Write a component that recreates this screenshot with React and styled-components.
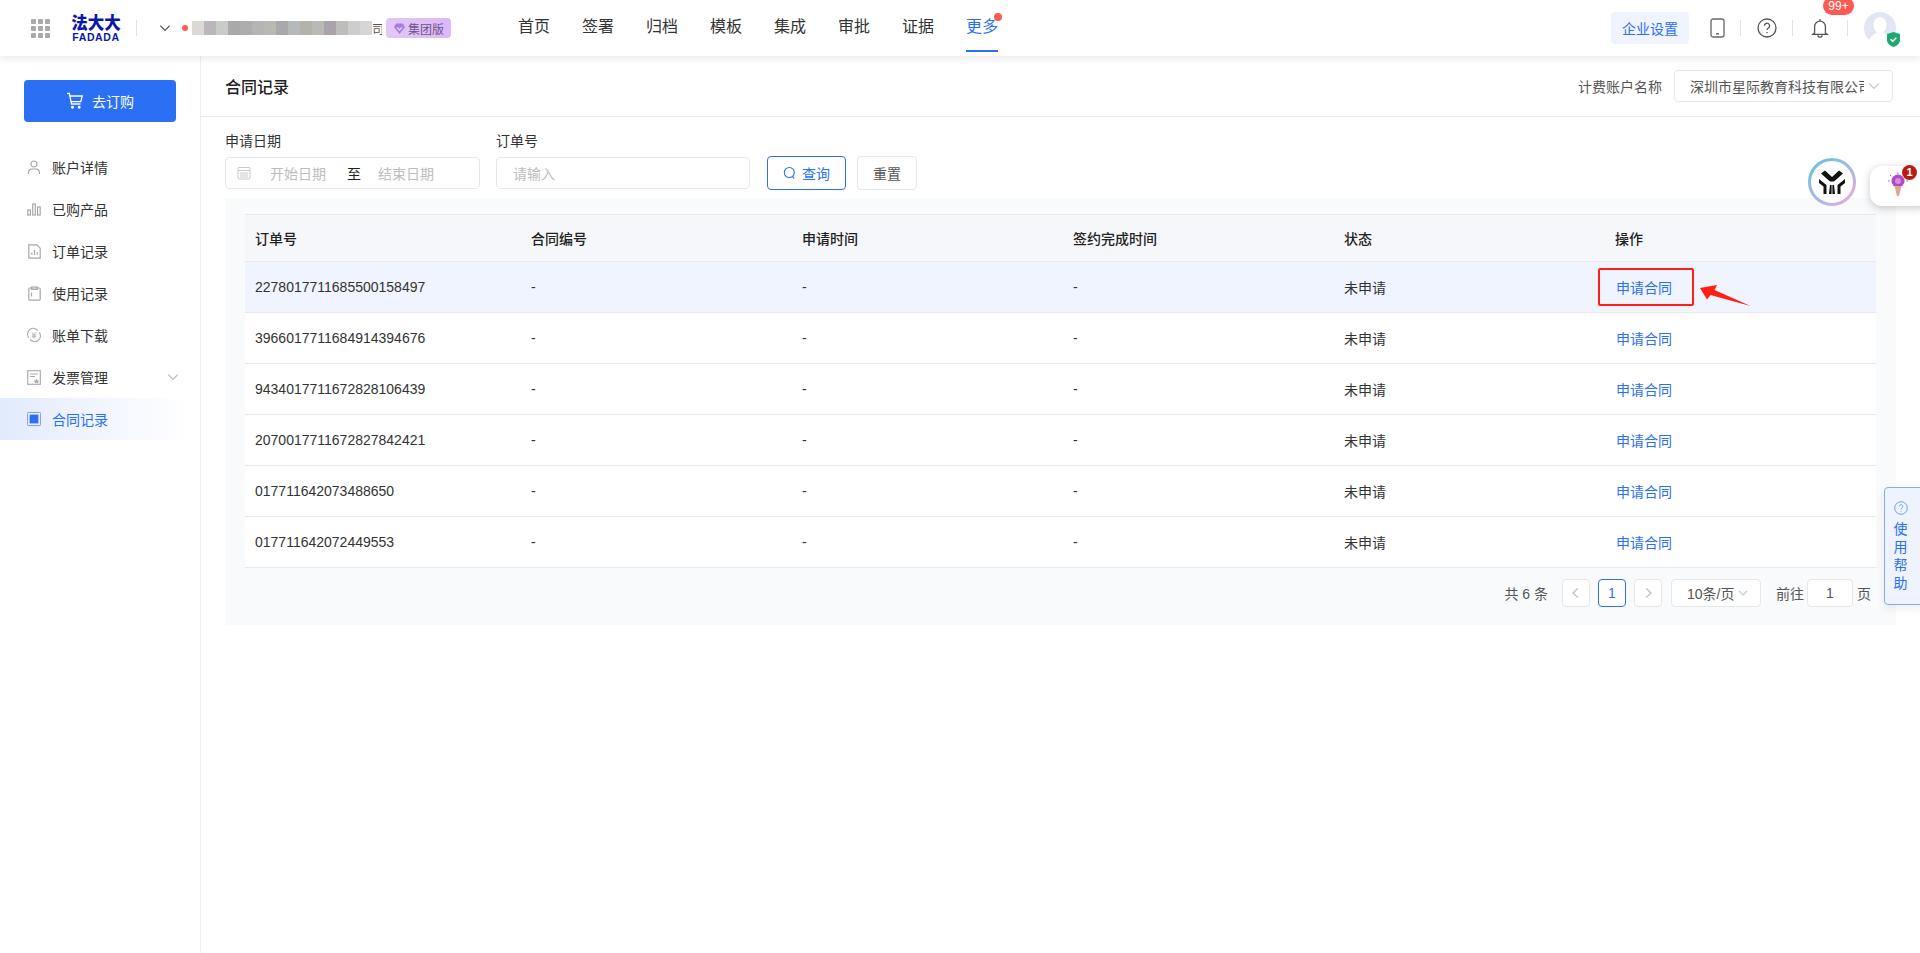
import React from 'react';
import styled, { createGlobalStyle } from 'styled-components';

const GlobalStyle = createGlobalStyle`
  * { box-sizing: border-box; }
  html, body { margin: 0; padding: 0; height: 100%; background: #fff; }
  body {
    font-family: "Liberation Sans", "Noto Sans CJK SC", sans-serif;
    font-size: 14px;
    color: #333;
  }
`;

const Page = styled.div`
  position: relative;
  width: 100%;
  height: 100vh;
  overflow: hidden;
  display: flex;
  flex-direction: column;
`;

const Header = styled.header`
  position: relative;
  z-index: 2;
  height: 56px;
  flex: none;
  display: flex;
  align-items: center;
  background: #fff;
  box-shadow: 0 2px 8px rgba(0, 0, 0, 0.1);
`;

const LeftGroup = styled.div`
  width: 518px;
  flex: none;
  display: flex;
  align-items: center;
  padding-left: 31px;
`;

const AppGrid = styled.div`
  display: grid;
  grid-template-columns: repeat(3, 5px);
  gap: 2px;
  margin-right: 21px;
  span { width: 5px; height: 5px; background: #a9a9a9; border-radius: 1px; }
`;

const Logo = styled.div`
  width: 50px;
  color: #0a18aa;
  font-weight: 700;
  display: flex;
  flex-direction: column;
  align-items: center;
`;

const LogoCn = styled.div`
  font-size: 16.5px;
  line-height: 16px;
  font-weight: 900;
  white-space: nowrap;
`;

const LogoEn = styled.div`
  font-size: 10.5px;
  line-height: 10px;
  letter-spacing: 0.6px;
  margin-top: 1px;
`;

const VLine = styled.div`
  width: 1px;
  height: 16px;
  background: #e4e4e6;
  flex: none;
`;

const LogoLine = styled(VLine)`
  margin: 0 21px 0 15px;
`;

const RedDot = styled.span`
  width: 6px;
  height: 6px;
  border-radius: 50%;
  background: #ff5a52;
  margin: 0 4px 0 10px;
  flex: none;
`;

const Mosaic = styled.div`
  display: flex;
  height: 14px;
  flex: none;
`;

const MosaicCell = styled.span`
  width: 12px;
  background: ${(p) => p.$c};
`;

const CompanyEnd = styled.span`
  font-size: 12px;
  color: #555;
  width: 10px;
  overflow: hidden;
  flex: none;
`;

const PlanBadge = styled.div`
  height: 20px;
  width: 65px;
  margin-left: 4px;
  flex: none;
  display: flex;
  align-items: center;
  justify-content: center;
  gap: 2px;
  border-radius: 4px;
  background: linear-gradient(90deg, #e2c8f6, #dcb8f8);
  color: #6d5488;
  font-size: 12px;
`;

const Nav = styled.nav`
  display: flex;
  gap: 32px;
  height: 56px;
`;

const NavItem = styled.a`
  position: relative;
  height: 52px;
  line-height: 54px;
  font-size: 16px;
  color: ${(p) => (p.$active ? '#2b6ff5' : '#333')};
  border-bottom: 2px solid ${(p) => (p.$active ? '#2b6ff5' : 'transparent')};
`;

const NavDot = styled.i`
  position: absolute;
  top: 13px;
  right: -4px;
  width: 8px;
  height: 8px;
  border-radius: 50%;
  background: #ff5a52;
`;

const RightGroup = styled.div`
  margin-left: auto;
  display: flex;
  align-items: center;
  padding-right: 24px;
`;

const SettingsBtn = styled.div`
  width: 78px;
  height: 32px;
  border-radius: 4px;
  background: #f0f4fe;
  color: #2b6ff5;
  display: flex;
  align-items: center;
  justify-content: center;
  margin-right: 21px;
`;

const ToolIcon = styled.div`
  display: flex;
  align-items: center;
  justify-content: center;
  width: ${(p) => p.$w}px;
  flex: none;
`;

const BellWrap = styled.div`
  position: relative;
  width: 54px;
  display: flex;
  justify-content: center;
  flex: none;
`;

const CountBadge = styled.span`
  position: absolute;
  left: 30px;
  top: -21px;
  width: 31px;
  height: 18px;
  border-radius: 9px;
  background: #ff5a52;
  color: #fff;
  font-size: 12px;
  line-height: 18px;
  text-align: center;
`;

const Avatar = styled.div`
  position: relative;
  width: 32px;
  height: 32px;
  margin-left: 16px;
  flex: none;
`;

const ShieldWrap = styled.div`
  position: absolute;
  right: -4px;
  bottom: -3px;
  line-height: 0;
`;

const Body = styled.div`
  flex: 1;
  display: flex;
  min-height: 0;
`;

const Sidebar = styled.aside`
  width: 201px;
  flex: none;
  border-right: 1px solid #eceef2;
  padding-top: 24px;
`;

const OrderBtn = styled.div`
  margin-left: 24px;
  width: 152px;
  height: 42px;
  border-radius: 4px;
  background: #2b6ff5;
  color: #fff;
  display: flex;
  align-items: center;
  justify-content: center;
  gap: 8px;
  margin-bottom: 24px;
`;

const MenuItem = styled.div`
  position: relative;
  height: 42px;
  display: flex;
  align-items: center;
  gap: 11px;
  padding-left: 27px;
  color: ${(p) => (p.$active ? '#2b6ff5' : '#333')};
  background: ${(p) => (p.$active ? 'linear-gradient(90deg, #e2eafd, #fff 95%)' : 'transparent')};
`;

const MenuIcon = styled.span`
  width: 14px;
  height: 16px;
  display: flex;
  align-items: center;
  justify-content: center;
  flex: none;
`;

const MenuCaret = styled.span`
  position: absolute;
  right: 20px;
  top: 14px;
  line-height: 0;
`;

const Main = styled.main`
  flex: 1;
  min-width: 0;
`;

const TitleBar = styled.div`
  height: 61px;
  padding: 0 27px 0 24px;
  display: flex;
  align-items: center;
  justify-content: space-between;
  border-bottom: 1px solid #e8e9ed;
`;

const Title = styled.h2`
  margin: 0;
  font-size: 16px;
  font-weight: 500;
  color: #222;
`;

const AccountPicker = styled.div`
  display: flex;
  align-items: center;
  gap: 12px;
  color: #555;
`;

const Select = styled.div`
  position: relative;
  width: ${(p) => p.$w}px;
  height: ${(p) => p.$h}px;
  border: 1px solid #e6e7eb;
  border-radius: 4px;
  display: flex;
  align-items: center;
  background: #fff;
  color: #555;
`;

const SelectText = styled.span`
  margin-left: 15px;
  width: 174px;
  white-space: nowrap;
  overflow: hidden;
`;

const SelectCaret = styled.span`
  position: absolute;
  right: 11px;
  top: 50%;
  transform: translateY(-50%);
  line-height: 0;
`;

const Content = styled.div`
  padding: 0 24px;
`;

const FilterBar = styled.div`
  display: flex;
  align-items: flex-end;
  padding-top: 14px;
`;

const Field = styled.div`
  margin-right: 16px;
`;

const FieldLabel = styled.div`
  line-height: 20px;
  margin-bottom: 6px;
  color: #333;
`;

const InputBox = styled.div`
  width: ${(p) => p.$w}px;
  height: 32px;
  border: 1px solid #e6e7eb;
  border-radius: 4px;
  display: flex;
  align-items: center;
  color: #bdbdbd;
  padding-left: ${(p) => p.$pad}px;
`;

const RangeSep = styled.span`
  color: #222;
  margin: 0 17px 0 21px;
`;

const RangeStart = styled.span`
  margin-left: 19px;
`;

const QueryBtn = styled.div`
  width: ${(p) => p.$w}px;
  height: 34px;
  margin: 0 10px 0 1px;
  margin-bottom: -1px;
  border-radius: 4px;
  border: 1px solid ${(p) => (p.$primary ? '#2b6ff5' : '#e6e7eb')};
  color: ${(p) => (p.$primary ? '#2b6ff5' : '#555')};
  display: flex;
  align-items: center;
  justify-content: center;
  gap: 6px;
`;

const Panel = styled.section`
  margin-top: 9px;
  background: #f9fafc;
  padding: 16px 20px 18px;
`;

const TableRow = styled.div`
  display: grid;
  grid-template-columns: 276px repeat(5, 271px);
  align-items: center;
  height: ${(p) => (p.$head ? 48 : 51)}px;
  background: ${(p) => (p.$head ? '#f6f7fa' : p.$hover ? '#f0f4fe' : '#fff')};
  border-top: ${(p) => (p.$head ? '1px solid #e8e9ed' : 'none')};
  border-bottom: 1px solid #e8e9ed;
  font-weight: ${(p) => (p.$head ? 500 : 400)};
  color: ${(p) => (p.$head ? '#222' : '#333')};
`;

const Cell = styled.div`
  padding-left: 10px;
`;

const LinkBtn = styled.a`
  color: #2b6ff5;
  margin-left: 1px;
`;

const Pagination = styled.div`
  display: flex;
  align-items: center;
  justify-content: flex-end;
  height: 28px;
  margin-top: 11px;
  padding-right: 5px;
  color: #555;
`;

const PageBtn = styled.div`
  width: 28px;
  height: 28px;
  margin-left: 8px;
  border-radius: 4px;
  border: 1px solid ${(p) => (p.$active ? '#2b6ff5' : '#e6e7eb')};
  color: ${(p) => (p.$active ? '#2b6ff5' : '#bbb')};
  background: #fff;
  display: flex;
  align-items: center;
  justify-content: center;
`;

const Total = styled.span`
  margin-right: 6px;
  word-spacing: 0;
`;

const JumpLabel = styled.span`
  margin: 0 3px 0 15px;
`;

const JumpInput = styled.div`
  width: 46px;
  height: 28px;
  border: 1px solid #e6e7eb;
  border-radius: 4px;
  background: #fff;
  color: #555;
  display: flex;
  align-items: center;
  justify-content: center;
  margin-right: 4px;
`;

const SizeSelect = styled(Select)`
  margin-left: 9px;
  justify-content: flex-start;
  padding-left: 15px;
`;

const AiLogo = styled.div`
  position: absolute;
  left: 1808px;
  top: 158px;
  z-index: 3;
  line-height: 0;
`;

const TipPill = styled.div`
  position: absolute;
  left: 1870px;
  top: 166px;
  width: 60px;
  height: 40px;
  border-radius: 12px;
  background: #fff;
  box-shadow: 0 2px 8px rgba(0, 0, 0, 0.22);
  z-index: 3;
  padding: 6px 0 0 18px;
  line-height: 0;
`;

const TipCount = styled.span`
  position: absolute;
  left: 32px;
  top: -1px;
  width: 15px;
  height: 15px;
  border-radius: 50%;
  background: #b81c14;
  color: #fff;
  font-size: 11px;
  font-weight: 700;
  line-height: 15px;
  text-align: center;
`;

const HelpTab = styled.div`
  position: absolute;
  left: 1884px;
  top: 487px;
  width: 40px;
  height: 118px;
  border: 1px solid #85aaf7;
  border-radius: 4px;
  background: #eef3fe;
  box-shadow: 0 3px 10px rgba(0, 0, 0, 0.08);
  color: #2b6ff5;
  display: flex;
  flex-direction: column;
  align-items: center;
  padding: 13px 7px 0 0;
  z-index: 3;
  line-height: 18px;
`;

const HelpIcon = styled.span`
  line-height: 0;
  margin-bottom: 5px;
`;

const RedMark = styled.div`
  position: absolute;
  left: 1598px;
  top: 268px;
  width: 96px;
  height: 38px;
  border: 2.5px solid #ff1f14;
  border-radius: 2px;
  z-index: 3;
`;

const RedArrow = styled.svg`
  position: absolute;
  left: 1698px;
  top: 282px;
  z-index: 3;
`;

const Chevron = ({ size = 12, color = '#bbb', dir = 'down' }) => {
  const d = {
    down: 'M2 4l4 4 4-4',
    left: 'M7.5 2L3.5 6l4 4',
    right: 'M4.5 2l4 4-4 4',
  }[dir];
  return (
    <svg width={size} height={size} viewBox="0 0 12 12" fill="none" stroke={color} strokeWidth="1.1">
      <path d={d} />
    </svg>
  );
};

const GemIcon = () => (
  <svg width="13" height="13" viewBox="0 0 14 14">
    <path d="M3.5 1.5h7L13 5.5 7 13 1 5.5z" fill="#a97be6" />
    <path d="M4.5 5.8L7 8.6l2.5-2.8" fill="none" stroke="#e9dbfb" strokeWidth="1.3" />
  </svg>
);

const PhoneIcon = () => (
  <svg width="15" height="20" viewBox="0 0 15 20" fill="none" stroke="#666" strokeWidth="1.3">
    <rect x="1" y="1" width="13" height="18" rx="2" />
    <path d="M6 15.8h3" stroke="#555" />
  </svg>
);

const QuestionIcon = ({ size = 20, color = '#555', sw = 1.3 }) => (
  <svg width={size} height={size} viewBox="0 0 20 20" fill="none" stroke={color} strokeWidth={sw}>
    <circle cx="10" cy="10" r="9" />
    <path d="M7.4 7.8a2.6 2.6 0 1 1 4 2.2c-.9.6-1.4 1.1-1.4 2.1" />
    <path d="M10 14v1.2" />
  </svg>
);

const BellIcon = () => (
  <svg width="18" height="20" viewBox="0 0 18 20" fill="none" stroke="#555" strokeWidth="1.3">
    <path d="M9 1v1.6M3.6 15V8.6a5.4 5.4 0 0 1 10.8 0V15l1.8 1.4H1.8z" />
    <path d="M7 17.2a2 2 0 0 0 4 0" />
  </svg>
);

const AvatarImage = () => (
  <svg width="32" height="32" viewBox="0 0 32 32">
    <circle cx="16" cy="16" r="16" fill="#e2e6f2" />
    <ellipse cx="16" cy="13" rx="6.5" ry="8" fill="#fff" />
    <path d="M5 29c2-7 7-7 8-9h6c1 2 6 2 8 9a16 16 0 0 1-22 0z" fill="#fff" />
  </svg>
);

const ShieldIcon = () => (
  <svg width="13" height="15" viewBox="0 0 13 15">
    <path d="M6.5 0L13 2v6c0 3.4-3 5.8-6.5 7C3 13.8 0 11.4 0 8V2z" fill="#1fa971" />
    <path d="M3.6 7.2l2.1 2.1 3.6-3.6" fill="none" stroke="#fff" strokeWidth="1.4" />
  </svg>
);

const CartIcon = () => (
  <svg width="18" height="18" viewBox="0 0 18 18" fill="none" stroke="#fff" strokeWidth="1.3">
    <path d="M1 1.5h2.4L5.5 12h9" />
    <path d="M4 4h12.2l-1.4 5.6H5" />
    <circle cx="6.5" cy="15.2" r=".8" fill="#fff" />
    <circle cx="13.2" cy="15.2" r=".8" fill="#fff" />
  </svg>
);

const SearchIcon = () => (
  <svg width="13" height="14" viewBox="0 0 13 14" fill="none" stroke="#2b6ff5" strokeWidth="1.1">
    <circle cx="6.3" cy="6.5" r="5" />
    <path d="M9.6 10.4l1.6 2.2" />
  </svg>
);

const CalendarIcon = () => (
  <svg width="14" height="14" viewBox="0 0 14 14" fill="none" stroke="#c9c9c9" strokeWidth="1">
    <rect x="1" y="1.5" width="12" height="11.5" rx="1" />
    <path d="M1 4.5h12M3 7h8M3 9h8M3 11h8" />
  </svg>
);

const gray = '#a8a8a8';

const menuIcons = {
  user: (
    <svg width="14" height="15" viewBox="0 0 14 15" fill="none" stroke={gray} strokeWidth="1.2">
      <circle cx="7" cy="4" r="3" />
      <path d="M1.5 14v-1.5A3.5 3.5 0 0 1 5 9h4a3.5 3.5 0 0 1 3.5 3.5V14" />
    </svg>
  ),
  bars: (
    <svg width="14" height="14" viewBox="0 0 14 14" fill="none" stroke={gray} strokeWidth="1.2">
      <rect x=".8" y="8" width="2.6" height="5" />
      <rect x="5.7" y="2" width="2.6" height="11" />
      <rect x="10.6" y="5" width="2.6" height="8" />
    </svg>
  ),
  order: (
    <svg width="13" height="15" viewBox="0 0 13 15" fill="none" stroke={gray} strokeWidth="1.2">
      <path d="M.8.8h8l3.4 3.4v10H.8z" />
      <path d="M3.8 11V8.5M6.5 11V6M9.2 11V8" />
    </svg>
  ),
  usage: (
    <svg width="13" height="15" viewBox="0 0 13 15" fill="none" stroke={gray} strokeWidth="1.2">
      <rect x=".8" y="2" width="11.4" height="12.2" rx="1" />
      <path d="M3.5 1h6v2.4h-6zM3.5 6.5v4" />
    </svg>
  ),
  bill: (
    <svg width="16" height="16" viewBox="0 0 16 16" fill="none" stroke={gray} strokeWidth="1.2">
      <path d="M2 11A6.5 6.5 0 0 1 12.5 3M14 5a6.5 6.5 0 0 1-10.500 8" />
      <path d="M5.500 4.800L8 7.500l2.500-2.700M5.500 8h5M5.500 10h5M8 7.500V12" strokeWidth="1" />
    </svg>
  ),
  invoice: (
    <svg width="14" height="15" viewBox="0 0 14 15" fill="none" stroke={gray} strokeWidth="1.1">
      <rect x=".7" y=".7" width="12.600" height="13.600" />
      <path d="M3 4h8M3 6.500h5" />
      <path d="M9.500 8.500l1 2 1.800.3-1.300 1.300.2 1.400-1.700-.8-1.700.8.200-1.400-1.300-1.300 1.800-.3z" fill={gray} stroke="none" />
    </svg>
  ),
  contract: (
    <svg width="16" height="16" viewBox="0 0 16 16">
      <rect x=".5" y=".5" width="15" height="15" rx="1" fill="none" stroke="#7d8cf0" />
      <rect x="3" y="3" width="10" height="10" fill="#2b6ff5" />
    </svg>
  ),
};

const AiMark = () => (
  <svg width="48" height="48" viewBox="0 0 48 48">
    <defs>
      <linearGradient id="ring" x1="0" y1="0" x2="1" y2="1">
        <stop offset="0" stopColor="#63c3de" />
        <stop offset="0.55" stopColor="#a9b8ea" />
        <stop offset="1" stopColor="#f0a8d6" />
      </linearGradient>
    </defs>
    <circle cx="24" cy="24" r="22.500" fill="#fff" stroke="url(#ring)" strokeWidth="3" />
    <path d="M13 15.500l4-3 7 6.500 7-6.500 4 3-9 8h-4z" fill="#111" />
    <path d="M11 21l7.500 6v9h-3v-7.500L11 25zM37 21l-7.500 6v9h3v-7.500L37 25z" fill="#111" />
    <path d="M22 27h1.600v9H21zM26 27h-1.600v9H27z" fill="#111" />
  </svg>
);

const BulbIcon = () => (
  <svg width="20" height="26" viewBox="0 0 20 26">
    <circle cx="10" cy="9" r="6.500" fill="#b048c8" />
    <circle cx="10" cy="9" r="3" fill="#d88ae0" />
    <path d="M6.500 14h7L11 24H9z" fill="#dca78c" />
    <path d="M10 .5v1.500M2 3l1 1M18 3l-1 1M0 9h1.500M18.500 9H20" stroke="#b048c8" strokeWidth="1" />
  </svg>
);

const navItems = ['首页', '签署', '归档', '模板', '集成', '审批', '证据', '更多'];

const sideItems = [
  { key: 'user', label: '账户详情' },
  { key: 'bars', label: '已购产品' },
  { key: 'order', label: '订单记录' },
  { key: 'usage', label: '使用记录' },
  { key: 'bill', label: '账单下载' },
  { key: 'invoice', label: '发票管理', caret: true },
  { key: 'contract', label: '合同记录', active: true },
];

const columns = ['订单号', '合同编号', '申请时间', '签约完成时间', '状态', '操作'];

const orders = [
  '2278017711685500158497',
  '3966017711684914394676',
  '9434017711672828106439',
  '2070017711672827842421',
  '017711642073488650',
  '017711642072449553',
];

const mosaicColors = [
  '#dcd8d6', '#bab6ba', '#c9cbc9', '#a9a9a9', '#adadad', '#b5b5b5', '#b9b8b1',
  '#a7a9ad', '#b5b9b9', '#b3b3ab', '#b9b9b5', '#aba3ab', '#bdbdb9', '#cdcdcd', '#d6d6d6',
];

export default function App() {
  return (
    <Page>
      <GlobalStyle />
      <Header>
        <LeftGroup>
          <AppGrid>
            {Array.from({ length: 9 }).map((_, i) => <span key={i} />)}
          </AppGrid>
          <Logo>
            <LogoCn>法大大</LogoCn>
            <LogoEn>FADADA</LogoEn>
          </Logo>
          <LogoLine />
          <Chevron size={14} color="#555" />
          <RedDot />
          <Mosaic>
            {mosaicColors.map((c, i) => <MosaicCell key={i} $c={c} />)}
          </Mosaic>
          <CompanyEnd>司</CompanyEnd>
          <PlanBadge><GemIcon />集团版</PlanBadge>
        </LeftGroup>
        <Nav>
          {navItems.map((n) => (
            <NavItem key={n} $active={n === '更多'}>
              {n}
              {n === '更多' && <NavDot />}
            </NavItem>
          ))}
        </Nav>
        <RightGroup>
          <SettingsBtn>企业设置</SettingsBtn>
          <ToolIcon $w={15}><PhoneIcon /></ToolIcon>
          <ToolIcon $w={15} />
          <VLine />
          <ToolIcon $w={51}><QuestionIcon /></ToolIcon>
          <VLine />
          <BellWrap>
            <BellIcon />
            <CountBadge>99+</CountBadge>
          </BellWrap>
          <VLine />
          <Avatar>
            <AvatarImage />
            <ShieldWrap><ShieldIcon /></ShieldWrap>
          </Avatar>
        </RightGroup>
      </Header>
      <Body>
        <Sidebar>
          <OrderBtn><CartIcon />去订购</OrderBtn>
          {sideItems.map((item) => (
            <MenuItem key={item.key} $active={item.active}>
              <MenuIcon>{menuIcons[item.key]}</MenuIcon>
              {item.label}
              {item.caret && <MenuCaret><Chevron size={14} color="#bbb" /></MenuCaret>}
            </MenuItem>
          ))}
        </Sidebar>
        <Main>
          <TitleBar>
            <Title>合同记录</Title>
            <AccountPicker>
              计费账户名称
              <Select $w={219} $h={32}>
                <SelectText>深圳市星际教育科技有限公司</SelectText>
                <SelectCaret><Chevron size={14} color="#c4c4c4" /></SelectCaret>
              </Select>
            </AccountPicker>
          </TitleBar>
          <Content>
            <FilterBar>
              <Field>
                <FieldLabel>申请日期</FieldLabel>
                <InputBox $w={255} $pad={11}>
                  <CalendarIcon />
                  <RangeStart>开始日期</RangeStart>
                  <RangeSep>至</RangeSep>
                  结束日期
                </InputBox>
              </Field>
              <Field>
                <FieldLabel>订单号</FieldLabel>
                <InputBox $w={254} $pad={16}>请输入</InputBox>
              </Field>
              <QueryBtn $primary $w={79}><SearchIcon />查询</QueryBtn>
              <QueryBtn $w={60}>重置</QueryBtn>
            </FilterBar>
            <Panel>
              <TableRow $head>
                {columns.map((c) => <Cell key={c}>{c}</Cell>)}
              </TableRow>
              {orders.map((o, i) => (
                <TableRow key={o} $hover={i === 0}>
                  <Cell>{o}</Cell>
                  <Cell>-</Cell>
                  <Cell>-</Cell>
                  <Cell>-</Cell>
                  <Cell>未申请</Cell>
                  <Cell><LinkBtn>申请合同</LinkBtn></Cell>
                </TableRow>
              ))}
              <Pagination>
                <Total>共 6 条</Total>
                <PageBtn><Chevron size={14} dir="left" /></PageBtn>
                <PageBtn $active>1</PageBtn>
                <PageBtn><Chevron size={14} dir="right" /></PageBtn>
                <SizeSelect $w={90} $h={28}>
                  10条/页
                  <SelectCaret><Chevron size={12} color="#c4c4c4" /></SelectCaret>
                </SizeSelect>
                <JumpLabel>前往</JumpLabel>
                <JumpInput>1</JumpInput>
                页
              </Pagination>
            </Panel>
          </Content>
        </Main>
      </Body>
      <AiLogo><AiMark /></AiLogo>
      <TipPill><BulbIcon /><TipCount>1</TipCount></TipPill>
      <HelpTab>
        <HelpIcon><QuestionIcon size={14} color="#6f9bf6" sw={1.4} /></HelpIcon>
        <span>使</span><span>用</span><span>帮</span><span>助</span>
      </HelpTab>
      <RedMark />
      <RedArrow width="56" height="28" viewBox="0 0 56 28">
        <path d="M2 6l17-3-2.500 5 36 16-40-11-3.500 4.500z" fill="#ff1f14" />
      </RedArrow>
    </Page>
  );
}
